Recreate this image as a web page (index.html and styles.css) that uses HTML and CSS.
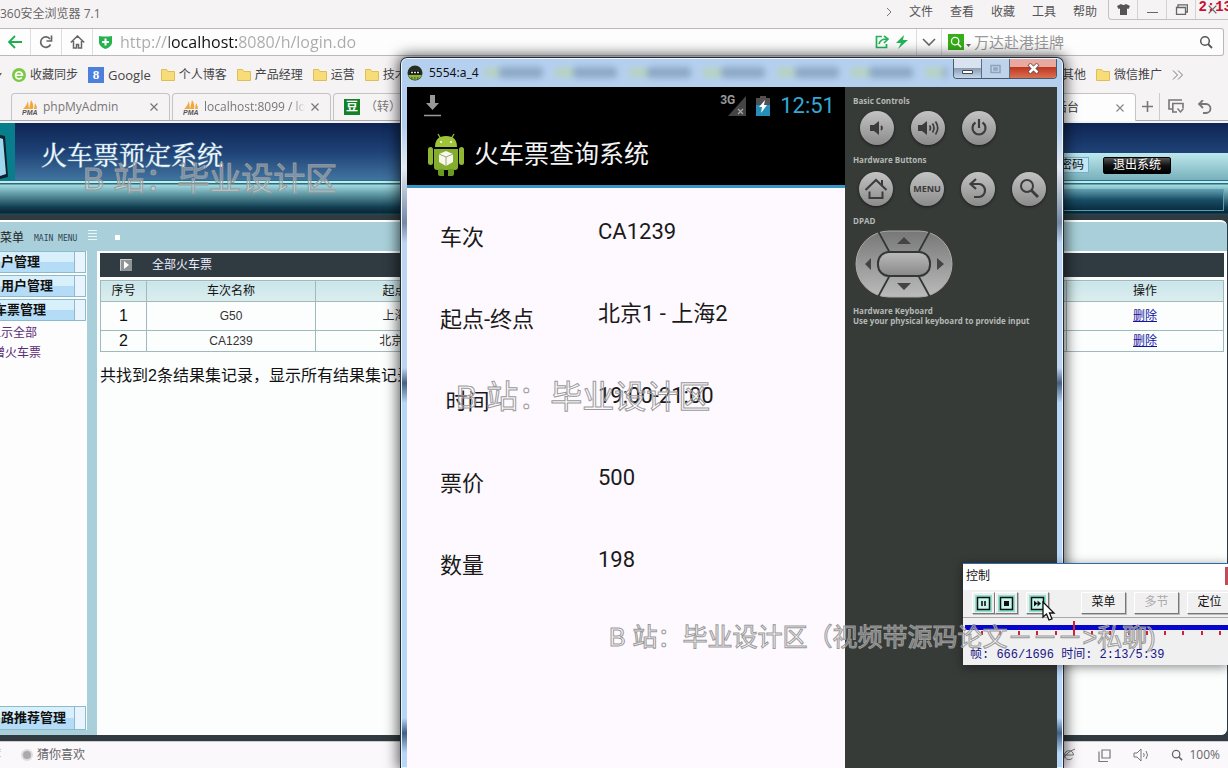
FILE: index.html
```html
<!DOCTYPE html>
<html lang="zh-CN">
<head>
<meta charset="utf-8">
<title>360安全浏览器 7.1</title>
<link rel="stylesheet" href="styles.css">
</head>
<body>
<svg class="defs" aria-hidden="true">
  <symbol id="folder" viewBox="0 0 14 13"><path d="M.5 1.5h5l1.500 2h6.500v9h-13z" fill="#f8dc78" stroke="#dfbd58"/></symbol>
  <symbol id="lens" viewBox="0 0 14 14"><circle cx="6" cy="6" r="4.300" fill="none" stroke="currentColor" stroke-width="1.500"/><path d="M9 9l4 4" stroke="currentColor" stroke-width="1.800"/></symbol>
  <symbol id="cross" viewBox="0 0 10 10"><path d="M1.500 1.500l7 7M8.500 1.500l-7 7" stroke="currentColor" stroke-width="1.200"/></symbol>
  <symbol id="pma" viewBox="0 0 16 15"><path d="M1 9Q4 7 6 1l1 8zM7 9L9 0q3 4 2 9zM12 9l1-6q2 3 2 6z" fill="#f2a73c"/><text x="0" y="15" font-size="7" font-weight="bold" font-style="italic" font-family="Liberation Sans" fill="#555">PMA</text></symbol>
</svg>

<div class="browser">
  <header class="titlebar">
    <span>360安全浏览器 7.1</span>
    <nav class="menus"><svg width="6" height="10" viewBox="0 0 6 10"><path d="M1 1l4 4-4 4" fill="none" stroke="#777"/></svg><button>文件</button><button>查看</button><button>收藏</button><button>工具</button><button>帮助</button></nav>
    <div class="wincontrols">
      <button aria-label="皮肤"><svg width="13" height="11" viewBox="0 0 13 11"><path d="M4 0q2.500 2 5 0l4 2-1.500 3-1.500-.5V11H3V4.500L1.500 5 0 2z" fill="#555"/></svg></button>
      <button aria-label="最小化"><svg width="13" height="11" viewBox="0 0 13 11"><path d="M1 8.500h11" stroke="#666"/></svg></button>
      <button aria-label="还原"><svg width="13" height="11" viewBox="0 0 13 11"><path d="M1.500 3.500h9v7h-9zM3 3V.8h9.400V8H11" fill="none" stroke="#666" stroke-width="1.300"/></svg></button>
      <button class="shut" aria-label="关闭"><svg width="11" height="11"><use href="#cross"/></svg></button>
    </div>
  </header>

  <div class="addressbar">
    <button class="nav" aria-label="后退"><svg width="16" height="14" viewBox="0 0 16 14"><path d="M15 7H2M8 1L2 7l6 6" fill="none" stroke="#20ad50" stroke-width="1.800"/></svg></button>
    <button class="nav" aria-label="刷新"><svg width="14" height="14" viewBox="0 0 14 14"><path d="M11.500 9.500A5.200 5.200 0 1 1 11 4" fill="none" stroke="#666" stroke-width="1.700"/><path d="M12.500.5V6H7.500" fill="none" stroke="#666" stroke-width="1.700"/></svg></button>
    <button class="nav" aria-label="主页"><svg width="15" height="14" viewBox="0 0 15 14"><path d="M.8 7.500L7.500 1l6.700 6.500M3.500 6v7h3v-3.500h2V13h3V6" fill="none" stroke="#666" stroke-width="1.500"/></svg></button>
    <svg class="shield" width="13" height="14" viewBox="0 0 13 14"><path d="M0 1q6.500 1 13 0v7q-1 4-6.500 6Q1 12 0 8z" fill="#25b34f"/><path d="M6.500 3.500v7M3 7h7" stroke="#fff" stroke-width="2"/></svg>
    <input class="url" type="text" aria-label="地址" value="http://localhost:8080/h/login.do">
    <div class="tools">
      <svg width="15" height="14" viewBox="0 0 15 14"><path d="M7 1.500H1.500v11h10V9" fill="none" stroke="#25b35a" stroke-width="1.700"/><path d="M4 9q1-5 8-5M9 1l4 3-4 4" fill="none" stroke="#25b35a" stroke-width="1.700"/></svg>
      <svg width="12" height="14" viewBox="0 0 12 14"><path d="M8 0L0 8h5l-3 6 10-9H7z" fill="#25b35a"/></svg>
    </div>
    <button class="drop" aria-label="展开"><svg width="14" height="8" viewBox="0 0 14 8"><path d="M1 1l6 6 6-6" fill="none" stroke="#666" stroke-width="1.600"/></svg></button>
    <div class="search">
      <span class="engine"><svg width="12" height="12"><use href="#lens"/></svg></span><svg class="caret" width="5" height="4" viewBox="0 0 5 4"><path d="M0 0h5L2.500 3z" fill="#666"/></svg>
      <input type="text" aria-label="搜索" value="万达赴港挂牌">
      <button aria-label="搜索"><svg width="14" height="14"><use href="#lens"/></svg></button>
    </div>
  </div>

  <nav class="bookmarks">
    <svg width="2" height="4" viewBox="0 0 2 4"><path d="M0 0h2L0 3z" fill="#666"/></svg>
    <a href="#"><svg width="14" height="14" viewBox="0 0 14 14"><circle cx="7" cy="7" r="7" fill="#7ac943"/><path d="M4 7.300h6.500A3.500 3.500 0 1 0 9.800 9.500" fill="none" stroke="#fff" stroke-width="1.600"/></svg>收藏同步</a>
    <a href="#"><span class="gicon">8</span><span class="latin">Google</span></a>
    <a href="#"><svg width="14" height="13"><use href="#folder"/></svg>个人博客</a>
    <a href="#"><svg width="14" height="13"><use href="#folder"/></svg>产品经理</a>
    <a href="#"><svg width="14" height="13"><use href="#folder"/></svg>运营</a>
    <a href="#"><svg width="14" height="13"><use href="#folder"/></svg>技术</a>
    <div class="more">
      <a href="#">其他</a>
      <a href="#"><svg width="14" height="13"><use href="#folder"/></svg>微信推广</a>
      <svg width="12" height="10" viewBox="0 0 12 10"><path d="M1 .5L5.500 5 1 9.500M6 .5L10.500 5 6 9.500" fill="none" stroke="#777"/></svg>
    </div>
  </nav>

  <div class="tabs">
    <div class="tab first"><svg width="16" height="15"><use href="#pma"/></svg><span>phpMyAdmin</span><button aria-label="关闭标签"><svg width="10" height="10"><use href="#cross"/></svg></button></div>
    <div class="tab"><svg width="16" height="15"><use href="#pma"/></svg><span class="fade">localhost:8099 / lo</span><button aria-label="关闭标签"><svg width="10" height="10"><use href="#cross"/></svg></button></div>
    <div class="tab"><b class="dou">豆</b><span>（转）</span></div>
    <div class="tab active"><span>后台</span><button aria-label="关闭标签"><svg width="10" height="10"><use href="#cross"/></svg></button></div>
    <button class="plus" aria-label="新标签"><svg width="11" height="11" viewBox="0 0 11 11"><path d="M5.500 0v11M0 5.500h11" stroke="#777" stroke-width="1.600"/></svg></button>
    <button class="restore" aria-label="标签列表"><svg width="17" height="15" viewBox="0 0 17 15"><path d="M4 10H1V1h13M9 13H4.800V4.500H15V9" fill="none" stroke="#777" stroke-width="1.600"/><path d="M9.500 9.500l3 3.500 3-3.500" fill="none" stroke="#777" stroke-width="1.400"/></svg></button>
    <button class="undo" aria-label="撤销"><svg width="15" height="14" viewBox="0 0 15 14"><path d="M2 4h7a4.500 4.500 0 0 1 0 9H6M6 0L2 4l4 4" fill="none" stroke="#777" stroke-width="1.800"/></svg></button>
  </div>

  <main class="page">
    <div class="banner">
      <svg class="logo" width="15" height="58" viewBox="0 0 15 58"><rect width="15" height="58" fill="#087d8b"/><path d="M0 12l5 1 3 41-8 2z" fill="#10202c"/><path d="M0 15l3 1 3 35-6 2z" fill="#9fd8ee"/></svg>
      <h1>火车票预定系统</h1>
      <div class="account"><button class="pw">密码</button><button class="logout">退出系统</button></div>
    </div>
    <div class="strip"><div class="inset"></div></div>

    <div class="frame">
      <div class="panelhead"><span>菜单</span><small>MAIN MENU</small><i class="lines"></i><i class="dot"></i></div>
      <div class="columns">
        <aside class="side">
          <button class="group">户管理</button>
          <button class="group">用户管理</button>
          <button class="group"><span class="cut">车票管理</span></button>
          <a class="sub" href="#"><span class="cut2">显示全部</span></a>
          <a class="sub" href="#"><span class="cut">增火车票</span></a>
          <button class="group last">路推荐管理</button>
        </aside>
        <section class="content">
          <h2><svg width="12" height="12" viewBox="0 0 12 12"><path d="M0 0h12v12H0z" fill="#8f9496"/><path d="M4 2l5 4-5 4z" fill="#fff"/><path d="M.5 11.500V.5h11" fill="none" stroke="#ccc"/></svg>全部火车票</h2>
          <table>
            <colgroup><col class="c1"><col class="c2"><col class="c3"><col><col class="c5"></colgroup>
            <thead><tr><th>序号</th><th>车次名称</th><th>起点</th><th></th><th>操作</th></tr></thead>
            <tbody>
              <tr class="tall"><td class="no">1</td><td>G50</td><td>上海</td><td></td><td><a href="#">删除</a></td></tr>
              <tr><td class="no">2</td><td>CA1239</td><td>北京1</td><td></td><td><a href="#">删除</a></td></tr>
            </tbody>
          </table>
          <p>共找到2条结果集记录，显示所有结果集记录</p>
        </section>
      </div>
    </div>
  </main>

  <footer class="status">
    <span class="cut2">荐</span><i class="bead"></i><span>猜你喜欢</span>
    <div class="zoomtools">
      <svg width="14" height="14" viewBox="0 0 14 14"><path d="M3 7h8.500A4.500 4.500 0 1 0 10.500 10M1 12Q3 5 13 1" fill="none" stroke="#777"/></svg>
      <svg width="13" height="13" viewBox="0 0 13 13"><path d="M4 1h8v8H4zM1 2.500v10h9" fill="none" stroke="#777" stroke-width="1.200"/></svg>
      <svg width="16" height="14" viewBox="0 0 16 14"><path d="M1 5h3l4-4v12L4 9H1zM10.500 5q1.500 2 0 4M13 3q3 4 0 8" fill="none" stroke="#777"/></svg>
      <span class="zoomlevel"><svg width="12" height="12"><use href="#lens"/></svg>100%</span>
    </div>
  </footer>
</div>

<section class="emulator">
  <header class="glass">
    <svg width="16" height="16" viewBox="0 0 16 16"><circle cx="8" cy="8" r="7.500" fill="#252d20"/><path d="M1 10h14a7.500 7.500 0 0 1-14 0" fill="#8cb63c"/><path d="M3 6h10v3H3z" fill="#111"/><path d="M4 7.500h2M7 7.500h2M10 7.500h2" stroke="#ddd" stroke-width="1.500"/><path d="M4 13h8" stroke="#26321b" stroke-dasharray="1.500"/></svg>
    <span>5554:a_4</span>
    <div class="blurred"><i></i><i></i><i></i><i></i><i></i><i></i><i></i><i></i></div>
    <div class="caption">
      <button aria-label="最小化"><svg width="13" height="12" viewBox="0 0 13 12"><path d="M1.500 7.500h10v3h-10z" fill="#fff" stroke="#445"/></svg></button>
      <button aria-label="最大化" disabled><svg width="11" height="10" viewBox="0 0 11 10"><path d="M1 1.500h9v7H1zM4 4h3v2H4z" fill="none" stroke="#8fa2b8" stroke-width="1.500"/></svg></button>
      <button class="close" aria-label="关闭"><svg width="13" height="11" viewBox="0 0 13 11"><path d="M2 1l9 9M11 1L2 10" stroke="#644" stroke-width="4"/><path d="M2.500 1.500l8 8M10.500 1.500l-8 8" stroke="#fff" stroke-width="2.500"/></svg></button>
    </div>
  </header>
  <div class="device">
    <div class="phone">
      <div class="sysbar">
        <svg width="17" height="22" viewBox="0 0 17 22"><path d="M6 0h5v8h4l-6.500 7L2 8h4z" fill="#999"/><path d="M0 20.500h17" stroke="#999" stroke-width="1.500"/></svg>
        <div class="sysright">
          <span class="net">3G</span>
          <svg width="19" height="20" viewBox="0 0 19 20"><path d="M18 0v20H0z" fill="#444"/><path d="M10 13l5 5M15 13l-5 5" stroke="#aaa" stroke-width="1.200"/></svg>
          <svg class="battery" width="14" height="20" viewBox="0 0 14 20"><path d="M4 0h6v2h4v8H0V2h4z" fill="#505050"/><path d="M0 9h14v11H0z" fill="#258fb8"/><path d="M9 4L3 11h3l-1 6 6-8H8z" fill="#fff"/></svg>
          <time>12:51</time>
        </div>
      </div>
      <div class="actionbar">
        <svg width="38" height="44" viewBox="0 0 38 44"><path d="M11 1l3 5M27 1l-3 5" stroke="#9bb93c" stroke-width="1.300"/><path d="M8 14Q8 3 19 3t11 11z" fill="#9fc43a"/><path d="M7 16h24v18q0 3-3 3H10q-3 0-3-3z" fill="#84ad2d"/><rect x="1" y="14" width="5" height="18" rx="2.500" fill="#8fb733"/><rect x="32" y="14" width="5" height="18" rx="2.500" fill="#8fb733"/><path d="M11 36h6v7h-4q-2 0-2-2zM21 36h6v5q0 2-2 2h-4z" fill="#6e9824"/><circle cx="14" cy="9" r="1" fill="#fff"/><circle cx="24" cy="9" r="1" fill="#fff"/><path d="M19 18l7 3v8l-7 4-7-4v-8z" fill="#f7f7ee"/><path d="M12 21l7 3 7-3M19 24v9" fill="none" stroke="#97aa70"/></svg>
        <h3>火车票查询系统</h3>
      </div>
      <dl>
        <div><dt>车次</dt><dd>CA1239</dd></div>
        <div><dt>起点-终点</dt><dd>北京1 - 上海2</dd></div>
        <div><dt>&nbsp;时间</dt><dd>19:00-21:00</dd></div>
        <div><dt>票价</dt><dd>500</dd></div>
        <div><dt>数量</dt><dd>198</dd></div>
      </dl>
    </div>
    <div class="controls">
      <h4>Basic Controls</h4>
      <div class="keys">
        <button aria-label="音量减"><svg width="20" height="20" viewBox="0 0 20 20"><path d="M3 7h4l5-4v14l-5-4H3z" fill="#3c3c3c"/><path d="M14 8q2 2 0 4" fill="none" stroke="#3c3c3c" stroke-width="1.800"/></svg></button>
        <button aria-label="音量加"><svg width="24" height="20" viewBox="0 0 24 20"><path d="M2 7h4l5-4v14l-5-4H2z" fill="#3c3c3c"/><path d="M13.500 7.500q2 2.500 0 5M16.500 5.500q3 4.500 0 9M19.500 3.500q4.500 6.500 0 13" fill="none" stroke="#3c3c3c" stroke-width="1.700"/></svg></button>
        <button aria-label="电源"><svg width="20" height="20" viewBox="0 0 20 20"><path d="M6.500 4.500a6.500 6.500 0 1 0 7 0M10 1v9" fill="none" stroke="#3c3c3c" stroke-width="2.200"/></svg></button>
      </div>
      <h4>Hardware Buttons</h4>
      <div class="keys hw">
        <button aria-label="Home"><svg width="24" height="22" viewBox="0 0 24 22"><path d="M1.500 12L12 2l10.500 10M18 7V2M5.500 13.500V20h13v-6.500" fill="none" stroke="#3c3c3c" stroke-width="2"/></svg></button>
        <button class="menukey">MENU</button>
        <button aria-label="返回"><svg width="20" height="22" viewBox="0 0 20 22"><path d="M3 6h8a6 6.500 0 0 1 0 13H6M8 1L2.500 6 8 11" fill="none" stroke="#3c3c3c" stroke-width="2.200"/></svg></button>
        <button aria-label="查找"><svg width="22" height="22" viewBox="0 0 22 22"><circle cx="9" cy="8" r="6" fill="none" stroke="#3c3c3c" stroke-width="2"/><path d="M13 12l7 7" stroke="#3c3c3c" stroke-width="2.800"/></svg></button>
      </div>
      <h4>DPAD</h4>
      <svg class="dpad" width="98" height="68" viewBox="0 0 98 68"><defs><linearGradient id="g" x2="0" y2="1"><stop stop-color="#777"/><stop offset="1" stop-color="#bbb"/></linearGradient><linearGradient id="k" x2="0" y2="1"><stop stop-color="#bbb"/><stop offset="1" stop-color="#888"/></linearGradient></defs><rect x="1" y="1" width="96" height="66" rx="33" fill="url(#g)" stroke="#aaa"/><path d="M23 1l12 22M75 1L63 23M23 67l12-22M75 67L63 45" stroke="#333835" stroke-width="1.800"/><rect x="23" y="22" width="52" height="24" rx="11" fill="url(#k)" stroke="#333835" stroke-width="2"/><path d="M42 14l7-7 7 7zM42 53l7 7 7-7zM16 28v12l-6-6zM82 28v12l7-6z" fill="#444"/></svg>
      <p>Hardware Keyboard<br>Use your physical keyboard to provide input</p>
    </div>
  </div>
</section>

<section class="player">
  <header>控制<i></i></header>
  <div class="playbar">
    <button class="media" aria-label="暂停"><svg width="15" height="15" viewBox="0 0 15 15"><path d="M1.500 1.500h12v12h-12z" fill="#c9f4ea" stroke="#111" stroke-width="1.500"/><path d="M6 5v5M9 5v5" stroke="#111" stroke-width="1.600"/></svg></button>
    <button class="media" aria-label="停止"><svg width="15" height="15" viewBox="0 0 15 15"><path d="M1.500 1.500h12v12h-12z" fill="#c9f4ea" stroke="#111" stroke-width="1.500"/><path d="M5 5h5v5H5z" fill="#111"/></svg></button>
    <button class="media ff" aria-label="快进"><svg width="15" height="15" viewBox="0 0 15 15"><path d="M1.500 1.500h12v12h-12z" fill="#c9f4ea" stroke="#111" stroke-width="1.500"/><path d="M4 4.500L7.500 7.500 4 10.500zM7.500 4.500L11 7.500l-3.500 3z" fill="#111"/></svg></button>
    <button class="txt">菜单</button><button class="txt" disabled>多节</button><button class="txt">定位</button>
  </div>
  <svg class="track" width="100%" height="20"><rect y="7" x="2" width="100%" height="5" fill="#0606cc"/><path d="M19 13v4M37 13v4M56 13v4M74 13v4M93 13v4M129 13v4M147 13v4M166 13v4M184 13v4M202 13v4M220 13v4M239 13v4M257 13v4" stroke="#d42030" stroke-width="2"/><path d="M111 3v15" stroke="#d42030" stroke-width="2"/></svg>
  <output>帧: 666/1696 时间: 2:13/5:39</output>
</section>
<svg class="pointer" width="14" height="21" viewBox="0 0 14 21"><path d="M1 1v15l3.500-3 2.500 6 3-1.200L7.500 12H12z" fill="#fff" stroke="#111" stroke-width="1.300"/></svg>

<div class="mark m1">B 站：毕业设计区</div>
<div class="mark m2">B 站：毕业设计区</div>
<div class="mark m3">B 站：毕业设计区（视频带源码论文－－－&gt;私聊)</div>
<div class="clock">2:13</div>
</body>
</html>
```
FILE: styles.css
```css
* { box-sizing: border-box; }
body { margin: 0; height: 100vh; position: relative; overflow: hidden; background: #f6f3f5; color: #333; font: 12px/16px "Open Sans", "Noto Sans CJK SC", sans-serif; }
button { font: inherit; color: inherit; background: none; border: 0; padding: 0; margin: 0; white-space: nowrap; }
input { font: inherit; border: 0; padding: 0; margin: 0; min-width: 0; background: none; outline: 0; }
h1, h2, h3, h4, p, dl, dd { margin: 0; font-weight: normal; }
a { color: inherit; text-decoration: none; }
svg { display: block; flex: none; }
.defs { position: absolute; width: 0; height: 0; }
.cut { margin-left: -7px; }
.cut2 { margin-left: -11px; }

/* Browser chrome */
.browser { height: 100vh; display: flex; flex-direction: column; }
.titlebar { display: flex; height: 28px; color: #666; }
.titlebar > span { padding-top: 6px; }
.menus { margin-left: auto; display: flex; gap: 17px; height: 24px; align-items: center; padding-right: 11px; color: #555; }
.wincontrols { display: flex; height: 20px; border: 1px solid #c4c1c4; border-top: 0; border-right: 0; border-bottom-left-radius: 4px; color: #666; }
.wincontrols button { width: 29px; display: grid; place-items: center; border-right: 1px solid #d5d2d5; }
.wincontrols .shut { width: 32px; border: 0; }
.addressbar { display: flex; align-items: center; height: 28px; margin-right: 4px; background: #fdfdfd; border: 1px solid #bbb8bb; border-left: 0; border-radius: 0 3px 3px 0; }
.nav { width: 31px; height: 26px; display: grid; place-items: center; border-right: 1px solid #ddd; flex: none; }
.shield { margin: 0 8px 0 6px; }
.url { flex: 1; font: 16px/24px "Open Sans", sans-serif; color: transparent; background: linear-gradient(90deg, #aaa 49px, #111 49px, #111 117px, #aaa 117px); -webkit-background-clip: text; background-clip: text; }
.tools { display: flex; gap: 6px; padding-right: 8px; }
.drop { width: 26px; height: 26px; display: grid; place-items: center; border: 1px solid #ddd; border-width: 0 1px; }
.search { width: 281px; display: flex; align-items: center; padding: 0 10px 0 6px; color: #555; }
.search input { flex: 1; font-size: 15px; color: #999; }
.caret { margin: 8px 3px 0 2px; }
.engine { width: 16px; height: 16px; display: grid; place-items: center; background: #35ae17; color: #fff; }
.bookmarks { height: 37px; display: flex; align-items: center; gap: 10px; color: #444; white-space: nowrap; }
.bookmarks a { display: flex; align-items: center; gap: 4px; }
.gicon { width: 16px; height: 16px; background: #4b80dd; color: #fff; text-align: center; font: bold 13px/16px "Liberation Serif", serif; }
.latin { font-size: 13px; }
.more { margin-left: auto; display: flex; align-items: center; gap: 10px; padding-right: 44px; }
.tabs { height: 28px; display: flex; border-bottom: 1px solid #aaa8aa; margin-bottom: 2px; color: #777; font-size: 12px; }
.tab { width: 159px; display: flex; align-items: center; gap: 5px; padding: 0 10px; margin-right: 2px; border: 1px solid #c6c3c6; border-bottom: 0; border-radius: 4px 4px 0 0; white-space: nowrap; flex: none; }
.tab.first { margin-left: 11px; }
.tab button { margin-left: auto; }
.tab .fade { flex: 1; min-width: 0; overflow: hidden; -webkit-mask-image: linear-gradient(90deg, #000 88%, transparent); mask-image: linear-gradient(90deg, #000 88%, transparent); }
.dou { width: 16px; height: 16px; background: #128227; color: #fff; line-height: 16px; text-align: center; }
.tab.active { margin: 0 0 -1px auto; background: #fdfdfd; color: #333; justify-content: flex-end; gap: 36px; width: 180px; height: 28px; }
.active button { margin: 0; color: #888; }
.plus, .restore { width: 24px; display: grid; place-items: center; border-right: 1px solid #ccc; }
.restore { width: 32px; border: 0; }
.undo { width: 36px; padding-left: 5px; }

/* Admin page */
.page { flex: 1; min-height: 0; display: flex; flex-direction: column; background: #2f3b40; font-family: "Liberation Sans", "Noto Sans CJK SC", sans-serif; }
.banner { height: 57px; flex: none; display: flex; background: linear-gradient(#0e2554, #1e4175 50%, #4174a0); }
.banner h1 { padding-left: 26px; font: 26px/62px "Noto Serif CJK SC", "Noto Sans CJK SC", serif; color: #eefcff; -webkit-text-stroke: 1px rgba(238,252,255,.4); }
.account { width: 420px; margin: 30px 0 0 auto; padding: 4px 57px 0 0; display: flex; justify-content: flex-end; align-items: flex-start; gap: 14px; background: linear-gradient(#bce9ed, #78b0bb); color: #111; }
.pw { height: 16px; padding-right: 4px; line-height: 14px; border: 1px solid #79aeca; background: #c1e7f4; }
.logout { height: 17px; padding: 0 9px; line-height: 15px; color: #fff; background: linear-gradient(#555, #111 50%, #000); border: 1px solid #000; border-radius: 2px; }
.strip { height: 40px; flex: none; padding: 8px 4px 0; border-top: 1px solid #2b7080; background: linear-gradient(#b9edf1 0 2px, #2d6a7c 2px 3px, #a5dbe1 4px, #67a1ac 12px, #123f52 26px, #0b2634 32px, #155063 33px, #2f3b40 34px); }
.inset { height: 22px; width: 420px; margin-left: auto; border: 1px solid #5b9db0; background: linear-gradient(#5d9aad, #174d65 50%, #092d3f); }
.frame { flex: 1; min-height: 0; display: flex; flex-direction: column; margin: 0 1px 6px 0; border-top: 2px solid #fff; border-radius: 0 6px 6px 0; overflow: hidden; background: #a9d0da; }
.panelhead { height: 29px; flex: none; display: flex; align-items: center; color: #222; padding-top: 2px; }
.panelhead small { font: 8px/10px "DejaVu Sans Mono", monospace; padding: 3px 0 0 10px; color: #345; }
.lines { width: 9px; height: 10px; margin: 0 18px 5px 11px; background: repeating-linear-gradient(#e8f6f8 0 1px, transparent 1px 3px); }
.dot { width: 5px; height: 5px; background: #fff; }
.columns { flex: 1; min-height: 0; display: flex; }
.side { width: 87px; margin-bottom: 5px; display: flex; flex-direction: column; background: #fdfdfd; overflow: hidden; flex: none; }
.group { height: 22px; flex: none; margin: 0 1px 2px 0; padding-left: 1px; display: flex; align-items: center; font-weight: bold; font-size: 13px; color: #111; border: 1px solid #8cbccc; border-left: 0; background: linear-gradient(90deg, transparent 74px, #8cbccc 74px 75px, #e9f4ff 75px), linear-gradient(#d8f0fb 50%, #b4dcf7 50%); }
.sub { height: 20px; display: flex; align-items: center; color: #5b2b77; white-space: nowrap; }
.last { margin: auto 1px 0 0; height: 24px; }
.content { flex: 1; min-width: 0; margin-left: 10px; padding: 2px 3px; background: #fcfefe; color: #333; }
.content h2 { height: 24px; display: flex; align-items: center; gap: 20px; padding-left: 20px; background: #2f3a41; color: #eef; font-size: 12px; margin-bottom: 3px; }
table { width: 100%; table-layout: fixed; border-collapse: collapse; text-align: center; }
.c1 { width: 46px; } .c2 { width: 169px; } .c3 { width: 158px; } .c5 { width: 157px; }
th, td { height: 21px; padding: 0; border: 1px solid #9fb9bd; font-weight: normal; }
th { background: linear-gradient(#c9e5ea, #dceeee); color: #111; }
.tall td { height: 29px; }
.no { font-size: 16px; color: #111; }
td a { color: #1414a0; text-decoration: underline; }
.content p { font-size: 16px; line-height: 24px; padding-top: 12px; color: #111; white-space: nowrap; }
.status { height: 27px; flex: none; display: flex; align-items: center; color: #666; background: #fbf8fb; border-top: 1px solid #ccc; }
.bead { width: 12px; height: 12px; margin: 0 4px 0 20px; border-radius: 50%; background: #aaa; border: 2px solid #ddd; }
.zoomtools { margin-left: auto; padding-right: 8px; display: flex; align-items: center; gap: 22px; }
.zoomlevel { display: flex; align-items: center; gap: 6px; }

/* Emulator window */
.emulator { position: absolute; left: 400px; right: 164px; top: 57px; bottom: 0; display: flex; flex-direction: column; padding: 0 6px; border: 1px solid #222b38; border-bottom: 0; border-radius: 7px 7px 0 0; background: linear-gradient(#b5d0ef 0 70px, #e4ebf4 110px, #7388a4 165px, #bdd5f1 185px 310px, #47607f 325px, #b8d6f8 345px 660px, #405f84 675px, #b8d6f8 695px); box-shadow: inset 0 0 0 1px #e9f5ff, 0 0 14px 2px rgba(0,0,0,.65); }
.glass { height: 29px; flex: none; display: flex; align-items: center; gap: 6px; color: #111; overflow: hidden; }
.glass > span { font-family: "Noto Sans", sans-serif; }
.blurred { flex: 1; display: flex; gap: 30px; padding-left: 14px; filter: blur(3px); overflow: hidden; }
.blurred i { width: 44px; height: 11px; background: #8ca8c6; box-shadow: -19px 0 0 -1px #b7d2bd; flex: none; border-radius: 4px; }
.caption { align-self: flex-start; display: flex; border: 1px solid #4e5a6b; border-top: 0; border-radius: 0 0 4px 4px; overflow: hidden; height: 20px; margin-top: 1px; }
.caption button { width: 28px; display: grid; place-items: center; background: linear-gradient(#d9e3ef 45%, #8799ae 45%, #c6d8ec); border-right: 1px solid #5c6c82; }
.caption button:disabled { background: #bfd3ea; }
.caption .close { width: 46px; border: 0; background: linear-gradient(#e8a99e 40%, #bf3523 42%, #d9714f); }
.device { flex: 1; min-height: 0; display: grid; grid-template-columns: 438fr 212fr; }
.phone { background: #fdf9fe; color: #1a1a1a; overflow: hidden; min-width: 0; }
.sysbar { height: 37px; background: #000; padding: 0 10px 0 17px; display: flex; align-items: center; justify-content: space-between; }
.sysright { display: flex; align-items: center; }
.net { color: #999; font: bold 12px/14px Roboto, sans-serif; margin-bottom: 12px; margin-right: -7px; }
.battery { margin: 0 10px 0 9px; }
.phone time { font: 22px/28px Roboto, sans-serif; color: #35a8d5; }
.actionbar { height: 64px; display: flex; align-items: center; gap: 9px; padding-left: 20px; background: #000; border-bottom: 3px solid #3598c4; }
.actionbar h3 { font: 25px/32px Roboto, "Noto Sans CJK SC", sans-serif; color: #f4f4f4; }
.phone dl { padding: 32px 0 0 33px; font: 22px/32px Roboto, "Noto Sans CJK SC", sans-serif; }
.phone dl div { display: grid; grid-template-columns: 158px 1fr; height: 82px; }
.phone dt { padding-top: 2px; }
.phone dd { margin-top: -4px; }
.controls { min-width: 0; background: #373b38; padding: 9px 0 0 8px; color: #b5b8b5; font: bold 8px/10px "Open Sans", sans-serif; }
.controls h4, .controls p { font-weight: bold; }
.keys { display: flex; gap: 17px; padding: 5px 0 0 7px; height: 49px; }
.keys button { width: 34px; height: 34px; flex: none; display: grid; place-items: center; border-radius: 50%; background: linear-gradient(#c3c3c3, #8b8b8b); box-shadow: 0 1px 3px #191b19; color: #3c3c3c; }
.keys.hw { padding: 7px 0 0 6px; height: 51px; }
.keys .menukey { font: bold 9px/12px "Open Sans", sans-serif; }
.dpad { margin: 4px 0 8px 2px; }
.controls p { white-space: nowrap; }

/* Playback window */
.player { position: absolute; left: 963px; right: 0; top: 563px; height: 102px; background: #f1f0f1; border-top: 1px solid #2c6aa8; box-shadow: 0 2px 10px rgba(0,0,0,.45); color: #111; font-family: "Liberation Mono", "Noto Sans CJK SC", monospace; overflow: hidden; }
.player header { height: 26px; line-height: 26px; padding-left: 3px; background: #fff; display: flex; justify-content: space-between; }
.player header i { width: 3px; height: 18px; margin-top: 3px; background: #c44a55; }
.playbar { height: 28px; display: flex; align-items: flex-start; padding: 2px 0 0 9px; border-bottom: 1px solid #aaa; }
.playbar button { flex: none; height: 22px; border: 1px solid; border-color: #fff #777 #777 #fff; box-shadow: 1px 1px 0 #bbb; }
.playbar .media { width: 23px; display: grid; place-items: center; background: linear-gradient(#8fe3d2, #8fe3d2) center / 17px 17px no-repeat #eee; }
.playbar .ff { margin: 0 32px 0 8px; }
.playbar .txt { width: 45px; margin-right: 8px; }
.playbar .txt:disabled { color: #aaa; }
.player output { display: block; padding: 9px 0 0 7px; color: #16168a; white-space: pre; }
.pointer { position: absolute; left: 1042px; top: 601px; }

/* Overlaid captions */
.mark { position: absolute; white-space: pre; font: 32px/40px "Liberation Sans", "Noto Sans CJK SC", sans-serif; color: rgba(255,255,255,.3); -webkit-text-stroke: 1px #9a9a9a; pointer-events: none; }
.m1 { left: 83px; top: 159px; }
.m2 { left: 456px; top: 377px; }
.m3 { left: 609px; top: 617px; font-size: 25px; }
.clock { position: absolute; right: -4px; top: 0; color: #c8102e; font: bold 14px/14px "Liberation Mono", monospace; }
```
